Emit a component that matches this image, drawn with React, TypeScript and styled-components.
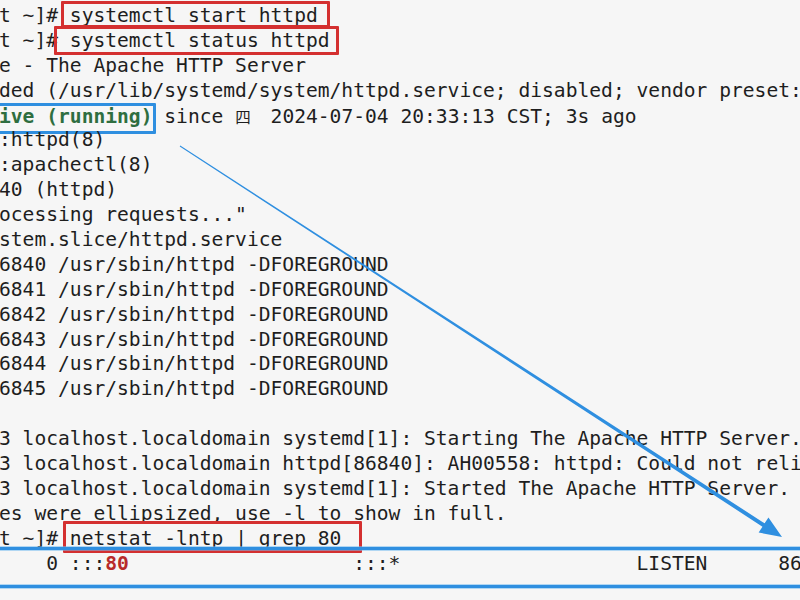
import React from "react";
import styled, { createGlobalStyle, css } from "styled-components";

const CELL = 11.82;
const LINE = 24.9;

const Global = createGlobalStyle`
  html, body {
    margin: 0;
    padding: 0;
    width: 800px;
    height: 600px;
    overflow: hidden;
    background: #f6f6f6;
  }
`;

const Screen = styled.div`
  position: relative;
  width: 800px;
  height: 600px;
  overflow: hidden;
  background: #f6f6f6;
`;

const Terminal = styled.div`
  display: flex;
  flex-direction: column;
  padding-top: 4px;
  margin-left: -1px;
  font-family: "DejaVu Sans Mono", "Liberation Mono", monospace;
  font-size: 19.63px;
  color: #1e1e1e;
`;

const Line = styled.div<{ $highlight?: boolean }>`
  position: relative;
  height: ${LINE}px;
  line-height: ${LINE}px;
  white-space: pre;
  ${(p) =>
    p.$highlight &&
    css`
      &::before,
      &::after {
        content: "";
        position: absolute;
        left: -10px;
        width: 830px;
        height: 3px;
        background: #2f8fe0;
        box-shadow: 0 0 0 1px rgba(120, 190, 240, 0.55);
      }
      &::before {
        top: -5px;
      }
      &::after {
        top: 33px;
      }
    `}
`;

const Boxed = styled.span<{
  $color: string;
  $l: number;
  $r: number;
  $t: number;
  $b: number;
}>`
  position: relative;
  &::after {
    content: "";
    position: absolute;
    left: ${(p) => p.$l}px;
    right: ${(p) => p.$r}px;
    top: ${(p) => p.$t}px;
    bottom: ${(p) => p.$b}px;
    border: 3px solid ${(p) => p.$color};
    border-radius: 1px;
  }
`;

const Running = styled.span`
  font-weight: bold;
  color: #2e6e40;
`;

const Port = styled.span`
  font-weight: bold;
  color: #b82a2a;
`;

const Wide = styled.span`
  display: inline-block;
  width: ${CELL * 2}px;
  font-family: "Noto Sans CJK SC", sans-serif;
  font-size: 15.5px;
  text-align: left;
`;

const Overlay = styled.svg`
  position: absolute;
  left: 0;
  top: 0;
  pointer-events: none;
`;

const RED = "#d43030";
const BLUE = "#2f8fe0";

export default function App() {
  return (
    <Screen>
      <Global />
      <Terminal>
        <Line>
          {"t ~]# "}
          <Boxed $color={RED} $l={-9} $r={-12} $t={-3} $b={-1}>
            systemctl start httpd
          </Boxed>
        </Line>
        <Line>
          {"t ~]# "}
          <Boxed $color={RED} $l={-16} $r={-9} $t={-3} $b={-3}>
            systemctl status httpd
          </Boxed>
        </Line>
        <Line>e - The Apache HTTP Server</Line>
        <Line>
          ded (/usr/lib/systemd/system/httpd.service; disabled; vendor preset: disabled)
        </Line>
        <Line>
          <Boxed $color={BLUE} $l={-8} $r={-4} $t={-2} $b={-6}>
            <Running>ive (running)</Running>
          </Boxed>
          {" since "}
          <Wide>四</Wide>
          {" 2024-07-04 20:33:13 CST; 3s ago"}
        </Line>
        <Line>:httpd(8)</Line>
        <Line>:apachectl(8)</Line>
        <Line>40 (httpd)</Line>
        <Line>ocessing requests..."</Line>
        <Line>stem.slice/httpd.service</Line>
        <Line>6840 /usr/sbin/httpd -DFOREGROUND</Line>
        <Line>6841 /usr/sbin/httpd -DFOREGROUND</Line>
        <Line>6842 /usr/sbin/httpd -DFOREGROUND</Line>
        <Line>6843 /usr/sbin/httpd -DFOREGROUND</Line>
        <Line>6844 /usr/sbin/httpd -DFOREGROUND</Line>
        <Line>6845 /usr/sbin/httpd -DFOREGROUND</Line>
        <Line> </Line>
        <Line>3 localhost.localdomain systemd[1]: Starting The Apache HTTP Server...</Line>
        <Line>3 localhost.localdomain httpd[86840]: AH00558: httpd: Could not reliably determine</Line>
        <Line>3 localhost.localdomain systemd[1]: Started The Apache HTTP Server.</Line>
        <Line>es were ellipsized, use -l to show in full.</Line>
        <Line>
          {"t ~]# "}
          <Boxed $color={RED} $l={-7} $r={-21} $t={-6} $b={-3}>
            netstat -lntp | grep 80
          </Boxed>
        </Line>
        <Line $highlight>
          {"    0 :::"}
          <Port>80</Port>
          {"                   :::*                    LISTEN      86840/httpd"}
        </Line>
      </Terminal>
      <Overlay width="800" height="600" viewBox="0 0 800 600">
        <polygon
          fill={BLUE}
          points="180.27,145.58 764.64,523.34 768.45,517.47 782,537 758.65,532.57 762.46,526.70 179.73,146.42"
        />
      </Overlay>
    </Screen>
  );
}
